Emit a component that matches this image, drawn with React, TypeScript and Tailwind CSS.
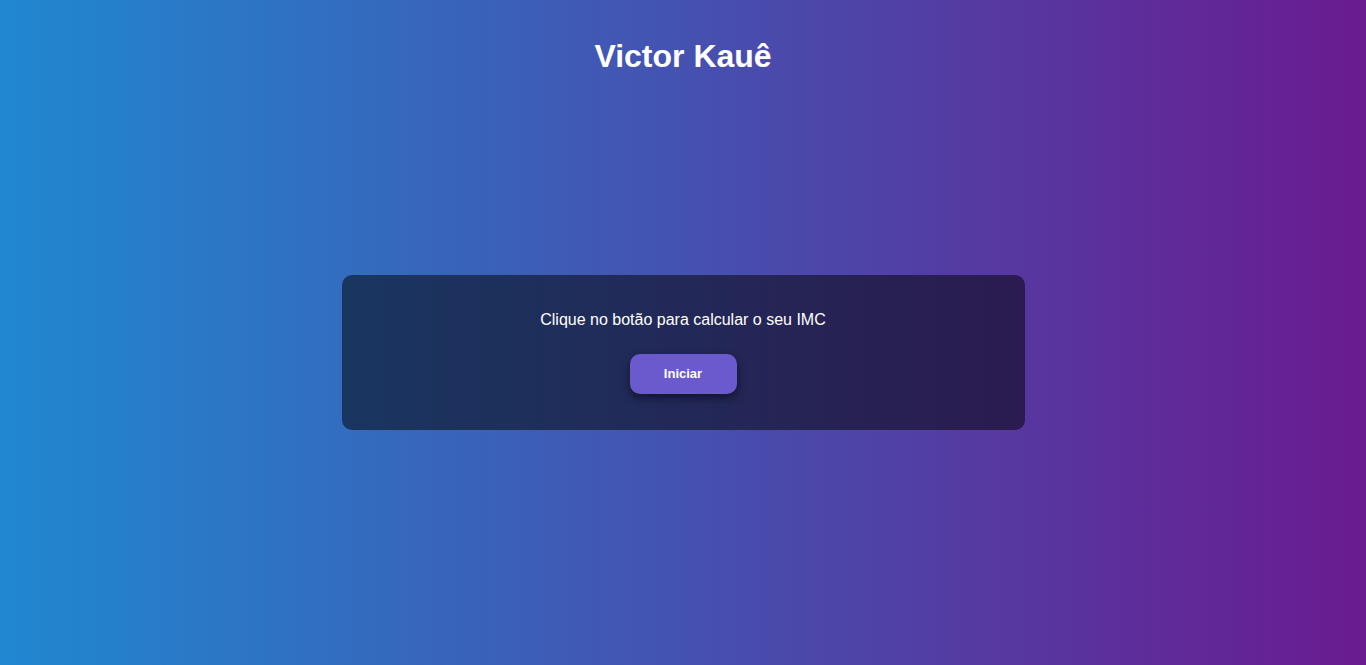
import React from "react";

const App = () => {
  return (
    <div className="min-h-[665px] w-full bg-[linear-gradient(to_right,#2088d0,#6a1b90)] font-['Liberation_Sans',Arial,sans-serif] text-white flex flex-col items-center pt-[38px]">
      <h1 className="text-[32px] leading-[37px] font-bold">Victor Kauê</h1>
      <div className="mt-[200px] w-1/2 h-[155px] rounded-[10px] bg-black/50 flex flex-col items-center pt-[36px]">
        <p className="text-[16px] leading-[18px]">Clique no botão para calcular o seu IMC</p>
        <button className="mt-[25px] w-[107px] h-[40px] rounded-[10px] bg-[#6a5acd] text-[13px] font-bold shadow-[0_4px_8px_rgba(0,0,0,0.5)]">
          Iniciar
        </button>
      </div>
    </div>
  );
};

export default App;
